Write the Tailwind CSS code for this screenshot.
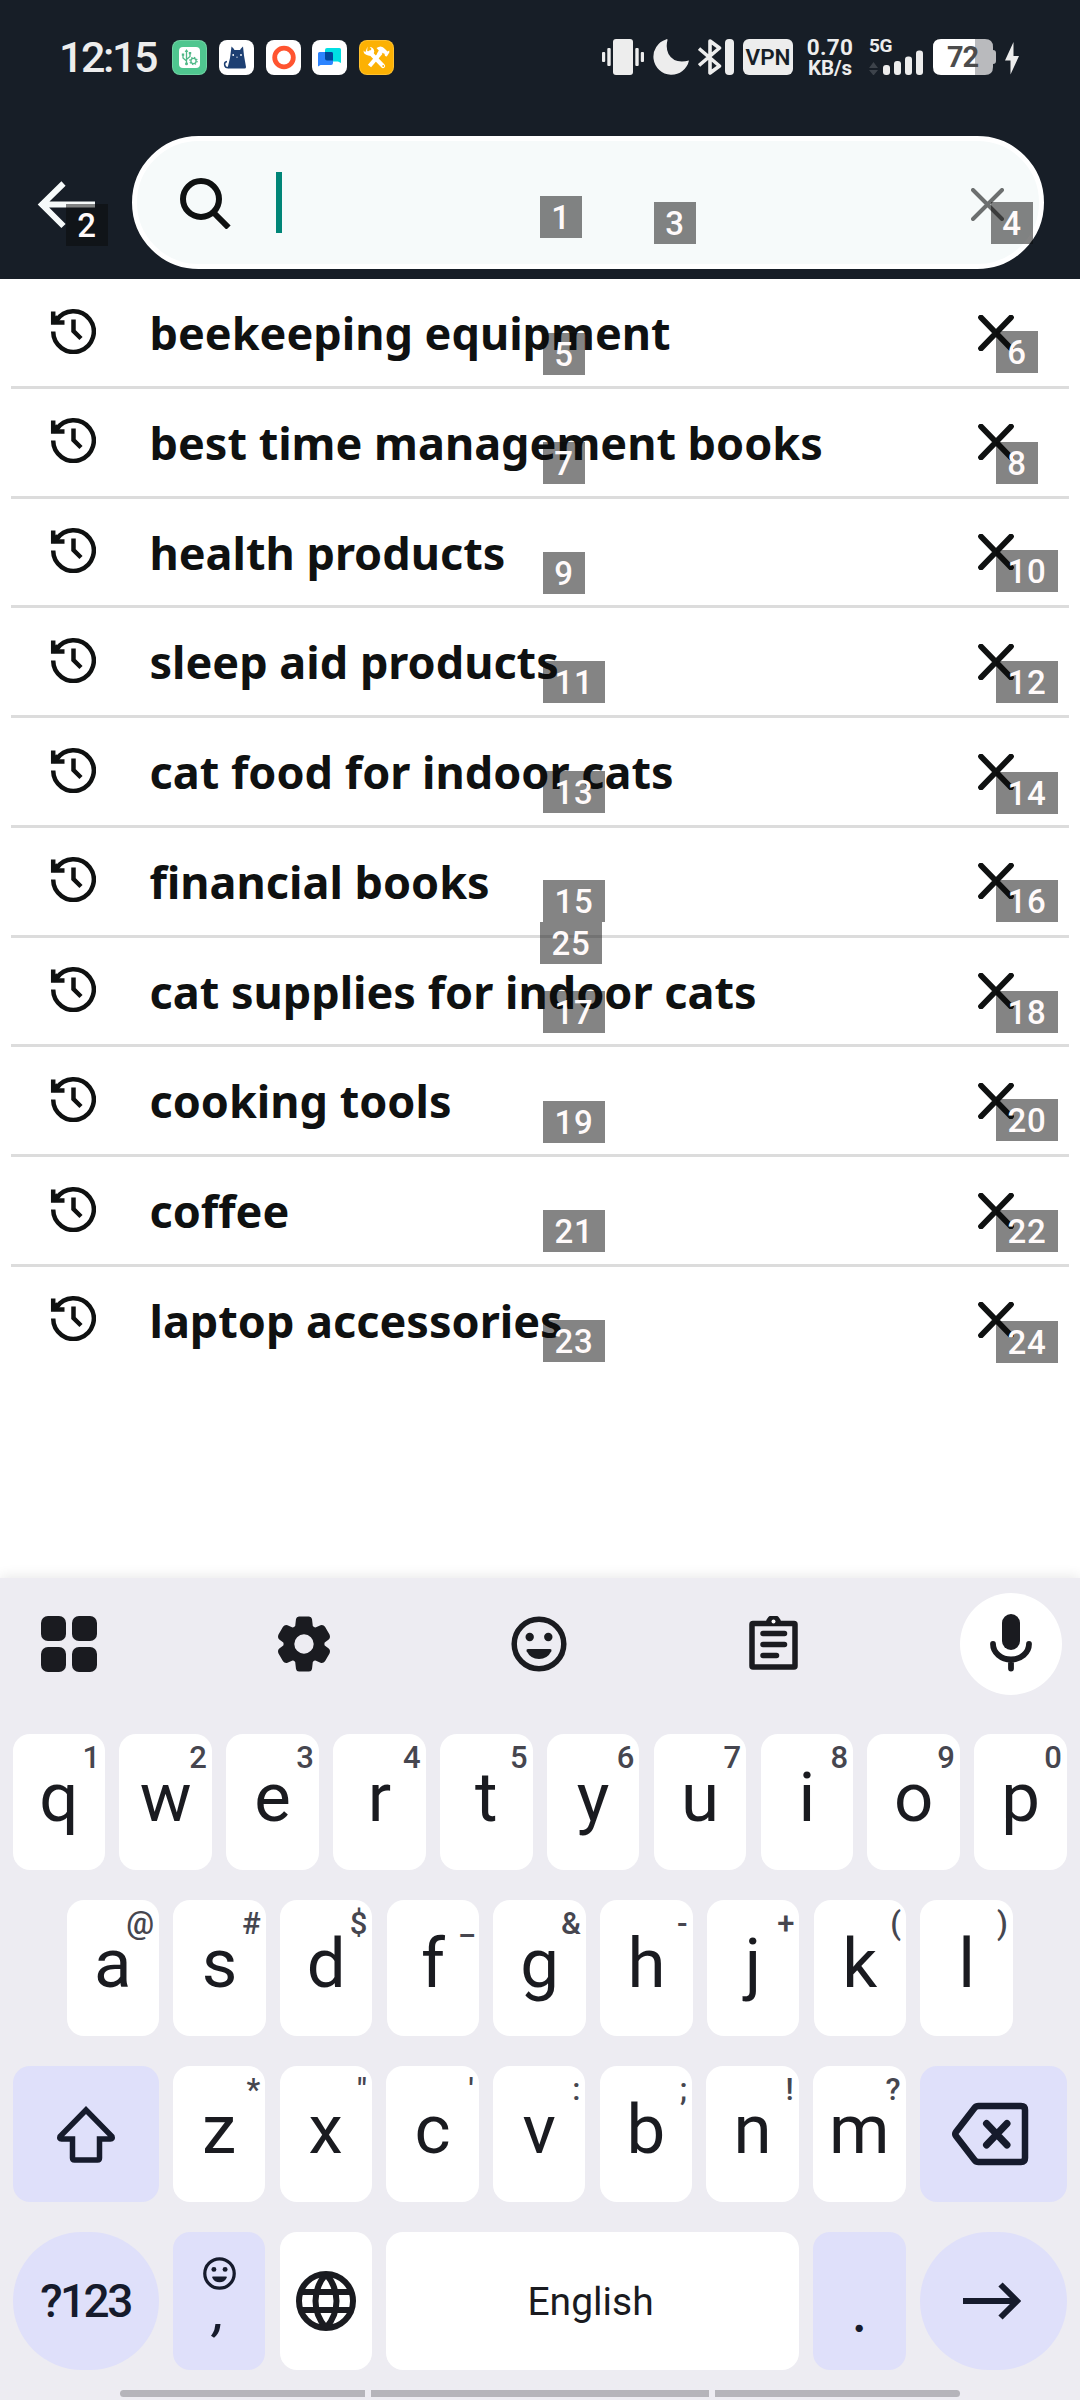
<!DOCTYPE html>
<html lang="en">
<head>
<meta charset="utf-8">
<title>Search history</title>
<script src="https://cdn.jsdelivr.net/npm/@tailwindcss/browser@4"></script>
</head>
<body class="relative w-[1080px] h-[2400px] overflow-hidden bg-white flex flex-col font-['Roboto',sans-serif]">

<header class="h-[279px] shrink-0 bg-[#171e27] flex flex-col">
  <div class="h-[114px] flex items-center text-[#ededed]">
    <div class="ml-[59px] w-[113px] text-[43px] leading-none font-medium tracking-[-2.4px] whitespace-nowrap">12:15</div>
    <div class="flex gap-[11.75px]">
      <svg class="size-[35px]" viewBox="0 0 35 35"><rect width="35" height="35" rx="8" fill="#6fd3a3"/><rect x="1" y="1" width="33" height="33" rx="7" fill="#4fc68f"/><rect x="7" y="7" width="21" height="21" rx="4" fill="#fff"/><g fill="none" stroke="#4fb887" stroke-width="1.3"><path d="M14.500 10v14M11 15v3l3.500 3M18 13v3.500l-3.500 3"/><circle cx="21.500" cy="21" r="2.600"/></g><g fill="#4fb887"><path d="M12.700 12l1.800-3 1.800 3zM9.800 13.500h2.400v2.200H9.800zM16.800 12h2.400v2.200h-2.400z"/><circle cx="14.500" cy="23.700" r="1.500"/></g><circle cx="21.500" cy="21" r="3.600" fill="none" stroke="#4fb887" stroke-width="1.300" stroke-dasharray="1.400 1.430"/></svg>
      <svg class="size-[35px]" viewBox="0 0 35 35"><rect width="35" height="35" rx="8" fill="#fff"/><path d="M12.500 6.500q2.500 2 3 3.500h5.500q.5-1.500 3-3.500l1 9L27 27q0 1.500-1.500 1.500H10q-1.500 0-1.200-1.500L11 18z" fill="#1d3f72"/><path d="M8 21.500c-3.500.5-3.300 6.500 1.500 6.300" fill="none" stroke="#1d3f72" stroke-width="1.500"/><circle cx="14.200" cy="15" r=".9" fill="#fff"/><circle cx="22" cy="15" r=".9" fill="#fff"/><circle cx="18" cy="17.200" r=".6" fill="#fff"/></svg>
      <svg class="size-[35px]" viewBox="0 0 35 35"><rect width="35" height="35" rx="8" fill="#fff"/><circle cx="18" cy="17.500" r="9.300" fill="none" stroke="#ff5430" stroke-width="4.800"/></svg>
      <svg class="size-[35px]" viewBox="0 0 35 35"><rect width="35" height="35" rx="8" fill="#fff"/><path d="M15 8h12.500q1.500 0 1.500 1.500V23l-3-1.500H15q-2 0-2-2V10q0-2 2-2z" fill="#00dfe3"/><path d="M7.500 12h12q1.500 0 1.500 1.500V23q0 2-2 2H8.500L6 26.500V13.500q0-1.500 1.500-1.500z" fill="#2c84ff"/><path d="M13 12h6.500q1.500 0 1.500 1.500v7H15q-2 0-2-2z" fill="#00479c"/></svg>
      <svg class="size-[35px]" viewBox="0 0 35 35"><rect width="35" height="35" rx="8" fill="#ffc12e"/><rect x="1" y="1" width="33" height="33" rx="7" fill="#fcb103"/><g fill="none" stroke="#fff" stroke-linecap="round"><path d="M11 12.500l13 13.500" stroke-width="4.200"/><path d="M22 12.500L10.500 26" stroke-width="4.200" stroke-linecap="butt"/></g><path d="M8.500 6.500l-.3 4.500 2.500.8L12.500 9l-1.800-2q4 0 4.600 4.500l-1.300 4-3.800.2Q4.500 15 4.500 10.500l1.800 1.800zM17.500 8q5-3.500 8.500 1l2.500 2.500 1.800-1v2l-2.500 4-1.800-.5-.5-2.200-2.500-1-2.500 3-2.500-2.300 1.800-3z" fill="#fff"/><circle cx="24.200" cy="26" r=".9" fill="#fcb103"/></svg>
    </div>
    <div class="ml-[208px] flex items-center h-9 leading-none">
      <svg class="w-[42px] h-9" viewBox="0 0 42 36" fill="#ededed"><rect x="11" width="20" height="36" rx="3"/><rect x="5.300" y="9" width="3.400" height="18" rx="1"/><rect x="33.300" y="9" width="3.400" height="18" rx="1"/><rect y="13" width="3.200" height="10" rx="1"/><rect x="38.800" y="13" width="3.200" height="10" rx="1"/></svg>
      <svg class="ml-[9px] size-9" viewBox="0 0 36 36"><path d="M13 0.500A18 18 0 1 0 36 21.500Q21 25 15.500 15 12.500 9 14.500 1q0-1.500-1.500-.5z" fill="#ededed"/></svg>
      <svg class="ml-[9px] size-9" viewBox="0 0 36 36"><path d="M1 9.500l20.500 17.500-9.500 7V2l9.500 7L1 26.500" fill="none" stroke="#ededed" stroke-width="3.600" stroke-linejoin="round"/><rect x="27" width="9" height="36" rx="4" fill="#ededed"/></svg>
      <div class="ml-[9px] w-[50px] h-9 rounded-md bg-[#ededed] text-[#171e27] text-[22.5px] font-semibold flex items-center justify-center">VPN</div>
      <div class="ml-[15px] w-11 h-9 flex flex-col items-center font-bold whitespace-nowrap text-[22.5px] leading-[17px] gap-[4px]"><span class="tracking-[0.3px]">0.70</span><span class="text-[20.5px]">KB/s</span></div>
      <div class="relative ml-[17px] w-[54px] h-9">
        <span class="absolute -top-px left-0 text-[19px] leading-4 font-bold tracking-[-0.5px]">5G</span>
        <svg class="w-[54px] h-9" viewBox="0 0 54 36" fill="#ededed"><path d="M0 29l4.500-6 4.500 6zM0 31h9l-4.500 5.500z" fill="#3d434b"/><rect x="14" y="26" width="7" height="10" rx="3"/><rect x="25" y="22" width="7" height="14" rx="3"/><rect x="36" y="17.500" width="7" height="18.500" rx="3"/><rect x="47" y="11.500" width="7" height="24.500" rx="3"/></svg>
      </div>
      <div class="relative ml-[10px] w-[63px] h-9">
        <svg class="w-[63px] h-9" viewBox="0 0 63 36"><path d="M8 0H42V36H8Q0 36 0 28V8Q0 0 8 0z" fill="#fff"/><path d="M42 0h10q8 0 8 8v3q3 0 3 3v8q0 3-3 3v3q0 8-8 8H42z" fill="#b9babd"/></svg>
        <span class="absolute left-[14px] top-[3px] text-[29px] leading-[30px] font-bold tracking-[-1.2px] text-[#4c4c4c]">72</span>
      </div>
      <svg class="ml-[9px] w-[14px] h-9" viewBox="0 0 14 36"><path d="M8.500 3L0 21.500h5.500V35.500L14 17H8.500z" fill="#ededed"/></svg>
    </div>
  </div>
  <div class="pt-[22px] flex">
    <svg class="w-[132px] h-[133px]" viewBox="0 0 132 133" fill="none" stroke="#f6fafa" stroke-width="6"><path d="M95 68.500H43M63.500 47.500L42 68.500l21.500 21.500"/></svg>
    <div class="w-[912px] h-[133px] rounded-full border-[5px] border-white bg-[#f6fafa] flex items-center">
      <svg class="ml-[43px] size-[52px]" viewBox="0 0 52 52" fill="none" stroke="#0f1111" stroke-width="6"><circle cx="21" cy="22" r="18"/><path d="M33.500 35.500L48.500 50.500"/></svg>
      <div class="ml-[44px] w-1.5 h-[61px] bg-[#008577]"></div>
      <svg class="ml-auto mr-[35.500px] mt-1 size-[33px]" viewBox="0 0 33 33" fill="none" stroke="#6c6f6f" stroke-width="4" stroke-linecap="round"><path d="M2 2L31 31M31 2L2 31"/></svg>
    </div>
  </div>
</header>

<main id="history" class="h-[1299px] shrink-0 px-[11px]"></main>

<section class="h-[822px] bg-[#edecf2] shadow-[0_-2px_12px_rgba(0,0,0,0.09)] text-[#1a1b20]">
  <div class="h-[156px] pt-[15px] pl-[41px] pr-[18px] flex">
    <div class="h-[102px] w-full flex items-center">
      <svg class="size-14" viewBox="0 0 56 56" fill="#1a1b20"><rect width="25" height="25" rx="7"/><rect x="31" width="25" height="25" rx="7"/><rect y="31" width="25" height="25" rx="7"/><rect x="31" y="31" width="25" height="25" rx="7"/></svg>
      <svg class="ml-[179px] size-14" viewBox="0 0 56 56"><path fill="#1a1b20" fill-rule="evenodd" d="M23 0.500h10q2.500 0 3 2.500l.8 7q1.500 1.800 3.200 1.300l4.500-2q2.800-.8 4.500 1.500l4.500 7.700q1.300 3-.8 5l-4 3q-.7 1.500 0 3l4 3q2.100 2 .8 5L49 45.200q-1.700 2.300-4.500 1.500l-4.500-2q-1.700-.5-3.200 1.300L36 53q-.5 2.500-3 2.500H23q-2.500 0-3-2.500l-.8-7q-1.500-1.800-3.200-1.300l-4.500 2q-2.800.8-4.500-1.500l-4.500-7.700q-1.300-3 .8-5l4-3q.7-1.500 0-3l-4-3q-2.100-2-.8-5L7 10.800Q8.700 8.500 11.500 9.300l4.500 2q1.700.5 3.200-1.300L20 3q.5-2.500 3-2.500zM28 18.300a9.700 9.700 0 1 0 0 19.400a9.700 9.700 0 1 0 0-19.400z"/></svg>
      <svg class="ml-[179px] size-14" viewBox="0 0 56 56"><circle cx="28" cy="28" r="24.800" fill="none" stroke="#1a1b20" stroke-width="5.500"/><g fill="#1a1b20"><circle cx="18.700" cy="21" r="4.200"/><circle cx="37.300" cy="21" r="4.200"/><path d="M17 33h22q2 0 1.300 2.300Q36.500 43 28 43t-12.300-7.700Q15 33 17 33z"/></g></svg>
      <svg class="ml-[179px] size-14" viewBox="0 0 56 56" fill="none" stroke="#1a1b20"><path d="M7 7.500H48q1 0 1 1V50q0 1-1 1H7q-1 0-1-1V8.500q0-1 1-1z" stroke-width="5.500"/><path d="M20 6.500a7.500 7.500 0 0 1 15 0v2.500h-15z" fill="#1a1b20" stroke="none"/><circle cx="27.500" cy="5.500" r="2" fill="#fff" stroke="none"/><path d="M17 17.500h21.500M17 28.500h21.500M17 39.500h13.500" stroke-width="5.500" stroke-linecap="round"/></svg>
      <div class="ml-auto size-[102px] rounded-full bg-white">
        <svg class="size-[102px]" viewBox="0 0 102 102"><rect x="42" y="21" width="18" height="36" rx="9" fill="#1a1b20"/><path d="M33 51a18 15.500 0 0 0 36 0M51 67v8.500" fill="none" stroke="#1a1b20" stroke-width="5.800" stroke-linecap="round"/></svg>
      </div>
    </div>
  </div>
  <div class="flex flex-col gap-[30px] pl-[12.5px] pr-[13.2px]">
    <div id="row1" class="flex gap-[14.3px]"></div>
    <div id="row2" class="flex gap-[14.3px] px-[54px]"></div>
    <div class="flex gap-[14.3px]">
      <div class="w-[146px] h-[136px] rounded-[17px] bg-[#dfe0fa] flex items-center justify-center">
        <svg class="size-[60px]" viewBox="0 0 60 60" fill="none" stroke="#161b2c" stroke-width="5.500"><path d="M30 6L4 32.500q-1 2.500 1.500 2.500H16.500V54q0 2 2 2h23q2 0 2-2V35H54.500q2.500 0 1.500-2.500z"/></svg>
      </div>
      <div id="row3" class="flex flex-1 gap-[14.3px]"></div>
      <div class="w-[147px] h-[136px] rounded-[17px] bg-[#dfe0fa] flex items-center justify-center">
        <svg class="-ml-1.5 w-[78px] h-[64px]" viewBox="0 0 78 64" fill="none" stroke="#161b2c" stroke-width="6.500"><path d="M27.500 4H70q4 0 4 4V56q0 4-4 4H27.500q-2.500 0-4-2L5 34q-1.500-2 0-4L23.500 6q1.500-2 4-2z"/><path d="M35.500 21.500L56 43M56 21.500L35.500 43" stroke-linecap="round" stroke-width="7"/></svg>
      </div>
    </div>
    <div class="flex gap-[14.3px] h-[138px]">
      <div class="w-[146px] rounded-full bg-[#dfe0fa] text-[#161b2c] text-[46px] leading-[138px] font-medium tracking-[-2.6px] text-center">?123</div>
      <div class="w-[92.500px] rounded-[17px] bg-[#dfe0fa] text-[#161b2c] flex flex-col items-center pt-[25px]">
        <svg class="size-[33px]" viewBox="0 0 56 56"><circle cx="28" cy="28" r="25" fill="none" stroke="#161b2c" stroke-width="5.500"/><g fill="#161b2c"><circle cx="18.500" cy="21" r="4.200"/><circle cx="37.500" cy="21" r="4.200"/><path d="M17 33h22q2 0 1.300 2.300Q36.500 43 28 43t-12.300-7.700Q15 33 17 33z"/></g></svg>
        <span class="text-[50px] leading-[46px] font-medium italic">,</span>
      </div>
      <div class="w-[92.500px] rounded-[17px] bg-white flex items-center justify-center">
        <svg class="size-[60px]" viewBox="0 0 60 60" fill="none" stroke="#1a1b20" stroke-width="6"><circle cx="30" cy="30" r="27"/><path d="M4 21H56M4 39H56M30 3Q19.500 15 19.500 30T30 57M30 3Q40.500 15 40.500 30T30 57"/></svg>
      </div>
      <div class="flex-1 rounded-[17px] bg-white pr-1 text-center text-[39px] leading-[140px]">English</div>
      <div class="w-[92.500px] rounded-[17px] bg-[#dfe0fa] text-[#161b2c] text-center text-[48px] leading-[164px] font-bold font-['Lato',sans-serif]">.</div>
      <div class="w-[147px] rounded-full bg-[#dfe0fa] flex items-center justify-center">
        <svg class="-ml-1 w-[60px] h-10" viewBox="0 0 60 40" fill="none" stroke="#161b2c" stroke-width="6"><path d="M2 20H54M39.500 3.500L56 20 39.500 36.500"/></svg>
      </div>
    </div>
  </div>
  <div class="mt-5 h-[7px] px-[120px] flex gap-1.5">
    <div class="w-[245px] bg-[#b5b4ba] rounded-l-full"></div>
    <div class="flex-1 bg-[#b5b4ba]"></div>
    <div class="w-[245px] bg-[#b5b4ba] rounded-r-full"></div>
  </div>
</section>

<div id="marks"></div>

<script>
const terms = ["beekeeping equipment","best time management books","health products","sleep aid products","cat food for indoor cats","financial books","cat supplies for indoor cats","cooking tools","coffee","laptop accessories"];
document.getElementById("history").innerHTML = terms.map((t, i) => `
  <div class="h-[109.75px] flex items-start ${i < 9 ? "border-b-[3px] border-[#dcdcdc]" : ""}">
    <svg class="ml-[39px] mt-[28.500px] size-[46px]" viewBox="0 0 46 46" fill="none" stroke="#0f1111" stroke-width="4.500"><path d="M3.200 23.500A20.300 20.300 0 1 0 6.500 12.500"/><path d="M3.200 3.500V14.500H14.500"/><path d="M3 14.500L8 9" stroke-width="5"/><path d="M23.500 11.500V23L31 30.500"/></svg>
    <div class="ml-[53.500px] text-[45px] leading-[108px] font-bold text-[#0f1111] whitespace-nowrap font-['Noto_Sans',sans-serif]">${t}</div>
    <svg class="ml-auto mr-[55px] mt-[35.500px] size-9" viewBox="0 0 36 36" fill="none" stroke="#0f1111" stroke-width="5.700" stroke-linecap="round"><path d="M3 2.500L33 33.500M33 2.500L3 33.500"/></svg>
  </div>`).join("");

const key = ([k, h]) => `
  <div class="relative flex-1 h-[136px] rounded-[17px] bg-white text-center text-[69px] leading-[127px]">${k}<span class="absolute right-[5px] top-0 text-[31px] leading-[47px] font-medium text-[#46464f]">${h}</span></div>`;
const fill = (id, a, b) => document.getElementById(id).innerHTML = [...a].map((k, i) => key([k, b[i]])).join("");
fill("row1", "qwertyuiop", "1234567890");
fill("row2", "asdfghjkl", ["@","#","$","_","&amp;","-","+","(",")"]);
fill("row3", "zxcvbnm", "*\"':;!?");

const marks = [[1,540,196],[2,66,204],[3,654,202],[4,991,202],[5,543,333],[6,996,331],[7,543,442],[8,996,442],[9,543,552],[10,996,550],[11,543,661],[12,996,661],[13,543,771],[14,996,772],[15,543,880],[16,996,880],[17,543,991],[18,996,991],[19,543,1101],[20,996,1099],[21,543,1210],[22,996,1210],[23,543,1320],[24,996,1321],[25,540,922]];
document.getElementById("marks").innerHTML = marks.map(([n, x, y]) => `
  <div class="absolute h-[42px] ${n > 9 ? "w-[62px]" : "w-[42px]"} bg-[#0a0a0a]/50 text-[#fffafa] text-[33px] leading-[44px] font-medium tracking-[0.8px] text-center" style="left:${x}px;top:${y}px">${n}</div>`).join("");
</script>
</body>
</html>
